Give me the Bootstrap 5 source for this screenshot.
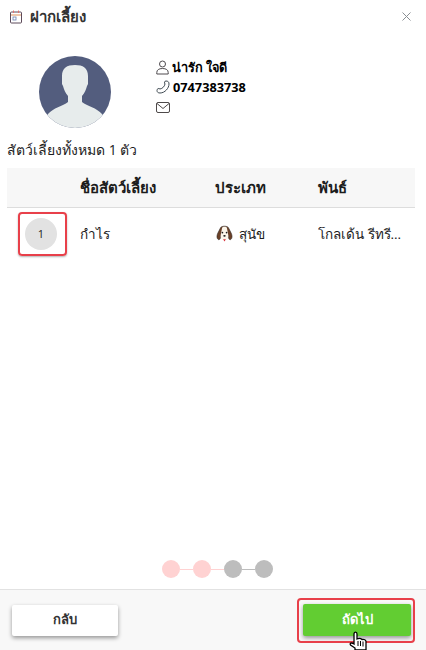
<!DOCTYPE html>
<html lang="th">

<head>
  <meta charset="UTF-8">
  <title>ฝากเลี้ยง</title>
  <meta name="viewport" content="width=device-width, initial-scale=1.0" />
  <link href="https://cdn.jsdelivr.net/npm/bootstrap@5.3.0/dist/css/bootstrap.min.css" rel="stylesheet" />
  <style>
    html, body { height: 100%; }
    body {
      font-family: "Open Sans", "Noto Sans", sans-serif;
      font-size: 13px;
      color: #1c1c1c;
      background: #fff;
      overflow: hidden;
    }
    .page-wrap { height: 650px; overflow: hidden; }
    .top-bar { height: 33px; padding: 0 15px 0 10px; }
    .top-title { font-size: 15px; font-weight: 600; color: #333; }
    .owner-row { padding: 23px 0 0 39px; gap: 45px; }
    .owner-pic { width: 72px; height: 72px; }
    .owner-info { padding-top: 1px; font-size: 12.75px; font-weight: 700; color: #000; line-height: 20px; }
    .owner-line { height: 20px; gap: 3px; }
    .pet-count { padding: 11px 7px 0; height: 40px; font-size: 14px; }
    .pet-table { margin: 0 11px 0 7px; width: 408px; table-layout: fixed; }
    .pet-table th {
      background: #f7f7f7;
      height: 39px;
      vertical-align: middle;
      font-size: 15px;
      font-weight: 700;
      color: #1c1c1c;
      padding: 0;
      border-bottom: 1px solid #ddd;
    }
    .pet-table td { height: 53px; vertical-align: middle; padding: 0; border: 0; font-size: 13.5px; }
    .row-num {
      width: 32px;
      height: 32px;
      background: #e2e2e2;
      font-size: 11px;
      margin-left: 18px;
      position: relative;
    }
    .row-num::after {
      content: "";
      position: absolute;
      left: -7px;
      top: -6px;
      width: 49px;
      height: 44px;
      border: 2px solid #e8404a;
      border-radius: 4px;
      box-shadow: 0 1px 2px rgba(0, 0, 0, .3);
    }
    .pet-kind { gap: 6px; padding-left: 1px; }
    .breed-cell { white-space: nowrap; overflow: hidden; text-overflow: ellipsis; }
    .step-dot { width: 18px; height: 18px; background: #bdbdbd; }
    .step-dot.done { background: #ffd2d2; }
    .step-line { width: 13px; height: 1px; background: #bdbdbd; }
    .step-line.done { background: #ffd2d2; }
    .steps-wrap { padding: 0 0 11px 9px; }
    .foot-bar {
      height: 61px;
      background: #f8f8f8;
      border-top: 1px solid #e2e2e2;
      padding: 0 15px 0 12px;
    }
    .btn-back, .btn-next {
      height: 31px;
      font-size: 13px;
      font-weight: 600;
      border: 0;
      border-radius: 2px;
      padding: 0;
      box-shadow: 0 2px 4px rgba(0, 0, 0, .4);
    }
    .btn-back { width: 106px; background: #fff; color: #333; }
    .btn-next { width: 108px; height: 32px; background: #62cd32; color: #fff; position: relative; }
    .btn-next::after {
      content: "";
      position: absolute;
      left: -6px;
      top: -6px;
      width: 118px;
      height: 45px;
      border: 2px solid #e8404a;
      border-radius: 4px;
    }
    .hand-cursor { position: absolute; left: 349px; top: 631px; width: 20px; height: 19px; }
  </style>
</head>

<body>
  <div class="page-wrap d-flex flex-column position-relative">
    <!-- หัวข้อ -->
    <div class="top-bar d-flex align-items-center justify-content-between">
      <div class="d-flex align-items-center gap-2">
        <svg width="12" height="14" viewBox="0 0 12 14" fill="none">
          <rect x=".5" y="2" width="11" height="11" rx="1" stroke="#5d4a5a" />
          <path d="M1 5h10" stroke="#e0905a" />
          <path d="M3.500 .5v2.500M8.500 .5v2.500" stroke="#e07070" />
          <rect x="3" y="7" width="3" height="3" stroke="#6a80b0" stroke-width=".8" />
        </svg>
        <span class="top-title">ฝากเลี้ยง</span>
      </div>
      <svg width="9" height="9" viewBox="0 0 9 9" stroke="#8a8f94" stroke-width="1">
        <path d="M.5.5l8 8M8.500.5l-8 8" />
      </svg>
    </div>

    <!-- เจ้าของ -->
    <div class="owner-row d-flex">
      <svg class="owner-pic flex-shrink-0" viewBox="0 0 72 72">
        <clipPath id="picClip">
          <circle cx="36" cy="36" r="36" />
        </clipPath>
        <g clip-path="url(#picClip)">
          <rect width="72" height="72" fill="#535d7e" />
          <path d="M9 58C14 52 24 50 29 46V40C26 37 25 33 24 30L23 28V20C23 12 28 9 36 9S49 12 49 20V28L48 30C47 33 46 37 43 40V46C48 50 58 52 63 58L72 72H0Z" fill="#e7ecec" />
        </g>
      </svg>
      <div class="owner-info">
        <div class="owner-line d-flex align-items-center">
          <svg width="13" height="15" viewBox="0 0 13 15" fill="none" stroke="#4e4a4e">
            <circle cx="6.500" cy="4" r="3" />
            <path d="M.8 14v-1.500c0-2.500 2-4 5.700-4s5.700 1.500 5.700 4V14z" />
          </svg>
          <span>น่ารัก ใจดี</span>
        </div>
        <div class="owner-line d-flex align-items-center">
          <svg width="14" height="14" viewBox="0 0 14 14" fill="none" stroke="#3f4a52">
            <path d="M10 1C8.500 1 8 2.500 9 4 8.500 6.500 6.500 8.500 4 9 2.500 8 1 8.500 1 10.500 1 12 2 13 4 13 9 13 13 8 13 4 13 2 12 1 10 1Z" />
          </svg>
          <span>0747383738</span>
        </div>
        <div class="owner-line d-flex align-items-center">
          <svg width="14" height="11" viewBox="0 0 14 11" fill="none" stroke="#4e4a4a">
            <rect x=".5" y=".5" width="13" height="10" rx="1.500" />
            <path d="M1 1.500l6 5 6-5" />
          </svg>
        </div>
      </div>
    </div>

    <div class="pet-count">สัตว์เลี้ยงทั้งหมด 1 ตัว</div>

    <!-- ตาราง -->
    <table class="pet-table">
      <colgroup>
        <col style="width: 73px">
        <col style="width: 135px">
        <col style="width: 103px">
        <col>
      </colgroup>
      <thead>
        <tr>
          <th></th>
          <th>ชื่อสัตว์เลี้ยง</th>
          <th>ประเภท</th>
          <th>พันธ์</th>
        </tr>
      </thead>
      <tbody>
        <tr>
          <td>
            <div class="row-num rounded-circle d-flex align-items-center justify-content-center">1</div>
          </td>
          <td>กำไร</td>
          <td>
            <div class="pet-kind d-flex align-items-center">
              <svg width="17" height="19" viewBox="0 0 18 19">
                <path d="M4.500 4C5 1 13 1 13.500 4L16 9C18 13 16.500 16 15 16 13.500 16 13 14 13 12H5C5 14 4.500 16 3 16 1.500 16 0 13 2 9Z" fill="#6b4027" stroke="#2b2320" stroke-width=".6" />
                <path d="M6.500 3.500C7.500 2 10.500 2 11.500 3.500L13 11C13.500 15 11 16.500 9 16.500S4.500 15 5 11Z" fill="#fbf5ea" />
                <circle cx="6.800" cy="8.500" r=".9" fill="#1e1e1e" />
                <circle cx="11.200" cy="8.500" r=".9" fill="#1e1e1e" />
                <ellipse cx="9" cy="12" rx="1.300" ry="1" fill="#1e1e1e" />
                <path d="M7.500 15.500h3L9 18z" fill="#d62f3a" />
              </svg>
              <span>สุนัข</span>
            </div>
          </td>
          <td class="breed-cell">โกลเด้น รีทรี...</td>
        </tr>
      </tbody>
    </table>

    <!-- ขั้นตอน -->
    <div class="steps-wrap mt-auto d-flex align-items-center justify-content-center">
      <div class="step-dot done rounded-circle"></div>
      <div class="step-line done"></div>
      <div class="step-dot done rounded-circle"></div>
      <div class="step-line done"></div>
      <div class="step-dot rounded-circle"></div>
      <div class="step-line"></div>
      <div class="step-dot rounded-circle"></div>
    </div>

    <div class="foot-bar d-flex align-items-center justify-content-between">
      <button type="button" class="btn btn-back">กลับ</button>
      <button type="button" class="btn btn-next">ถัดไป</button>
    </div>

    <svg class="hand-cursor" viewBox="0 0 20 19">
      <path d="M5 3C5 .5 8 .5 8 3V8C10 7 12 7.500 13 8.500 15 8 17 9 17 10.500V19H6V17L1.500 14C.5 12.500 2 11 5 13Z" fill="#fff" stroke="#000" stroke-width="1.300" />
      <path d="M9 10v5M11.500 10v5M14 10.500v5" stroke="#000" stroke-width="1" />
    </svg>
  </div>

  <script src="https://cdn.jsdelivr.net/npm/bootstrap@5.3.0/dist/js/bootstrap.bundle.min.js"></script>
</body>

</html>
